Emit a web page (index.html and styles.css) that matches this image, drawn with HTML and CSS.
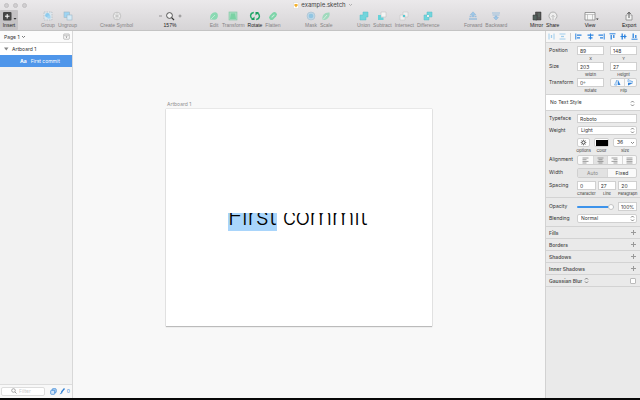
FILE: index.html
```html
<!DOCTYPE html>
<html lang="en">
<head>
<meta charset="utf-8">
<title>example.sketch</title>
<link rel="stylesheet" href="styles.css">
</head>
<body>
<div class="app">
<header class="header">
  <div class="titlebar">
    <div class="lights"><i></i><i></i><i></i></div>
    <h1 class="title"><svg viewBox="0 0 6 7" width="6" height="7"><path d="M.5.5h4l1 1v5h-5z" fill="#fff" stroke="#ccc" stroke-width=".4"/><path d="M1 3l1-1h2l1 1-2 2.5z" fill="#f4b12f"/></svg>example.sketch<svg viewBox="0 0 5 4" width="5" height="4"><path d="M1 1l1.500 1.500L4 1" fill="none" stroke="#999" stroke-width=".7"/></svg></h1>
  </div>
  <nav class="toolbar">
    <div class="group">
      <button class="tool on insert"><svg viewBox="0 0 16 10" width="16" height="10"><rect x="2" y="1" width="8.500" height="8.500" rx="1" fill="#444"/><path d="M6.200 3v4.500M4 5.200h4.500" stroke="#fff"/><path d="M12.500 7h3l-1.500 1.800z" fill="#333"/></svg>Insert</button>
    </div>
    <div class="group">
      <button class="tool"><svg viewBox="0 0 10 10" width="10" height="10"><rect x="1" y="1" width="8" height="8" fill="#dde7ee" stroke="#a8b3bb" stroke-width=".6" stroke-dasharray="1.500 1"/><circle cx="4.500" cy="4.300" r="2.300" fill="#8ccbee"/><rect x="4.500" y="4.500" width="3" height="3" fill="#a2d6f2"/></svg>Group</button>
      <button class="tool"><svg viewBox="0 0 10 10" width="10" height="10"><rect x="1" y="1" width="5.500" height="5.500" fill="#9ed5f3" stroke="#9db6c5" stroke-width=".6"/><rect x="4" y="4" width="5" height="5" fill="#d5ebf7" stroke="#9db6c5" stroke-width=".6"/></svg>Ungroup</button>
    </div>
    <div class="group">
      <button class="tool"><svg viewBox="0 0 10 10" width="10" height="10"><circle cx="5" cy="5" r="3.800" fill="#eee" stroke="#b4b4b4" stroke-width=".7"/><path d="M5 1.500v7M2.500 3.500L5 5l2.500-1.500M2.500 6.500L5 5l2.500 1.500" fill="none" stroke="#bbb" stroke-width=".7"/></svg>Create Symbol</button>
    </div>
    <div class="group">
      <button class="tool on"><svg viewBox="0 0 24 10" width="24" height="10"><path d="M1 5h3M20.500 5h3M22 3.500v3" stroke="#777" stroke-width=".7"/><circle cx="11.500" cy="4.500" r="2.900" fill="#f3f3f3" stroke="#444" stroke-width=".9"/><path d="M13.600 6.600l2.400 2.400" stroke="#333" stroke-width="1.200"/></svg>157%</button>
    </div>
    <div class="group">
      <button class="tool"><svg viewBox="0 0 10 10" width="10" height="10"><path d="M1.300 8.500C.3 4 3.500 1 6.500 1.300 10 2 9.500 8 6 8.800z" fill="#8bd9b3"/><path d="M2 8l4-4" stroke="#d5f2e2" stroke-width=".7"/></svg>Edit</button>
      <button class="tool"><svg viewBox="0 0 10 10" width="10" height="10"><rect x="1" y="1" width="8" height="8" fill="#a6ddc0" stroke="#82c7a3" stroke-width=".6"/><path d="M3 2.500h4l1 5.500H2z" fill="#7bd2a4"/></svg>Transform</button>
      <button class="tool on"><svg viewBox="0 0 12 10" width="12" height="10"><path d="M4.800 1.500C1 2 .5 6.500 3.800 8M7.200 8.500c3.800-.5 4.300-5 1-6.500" fill="none" stroke="#20a968" stroke-width="1.400"/><path d="M2 9h3.500V5.500zM10 1H6.500v3.500z" fill="#179b5c"/></svg>Rotate</button>
      <button class="tool"><svg viewBox="0 0 10 10" width="10" height="10"><g transform="rotate(-45 5 5)"><rect x=".5" y="2.500" width="9" height="5" rx="2.500" fill="#7ed4a9"/><path d="M3 5h4" stroke="#c9eeda"/></g></svg>Flatten</button>
    </div>
    <div class="group">
      <button class="tool"><svg viewBox="0 0 10 10" width="10" height="10"><circle cx="5" cy="5" r="4" fill="#bcd7e7" stroke="#a2b9c8" stroke-width=".5"/><circle cx="5" cy="5" r="2.300" fill="#91c5e2"/></svg>Mask</button>
      <button class="tool"><svg viewBox="0 0 10 10" width="10" height="10"><path d="M1.500 9C.5 4 4 1 8.500 1.500 9.500 6 6 9.500 1.500 9z" fill="#a0d9bd"/><path d="M2 8.500L6 4" stroke="#dff4e9" stroke-width=".8"/></svg>Scale</button>
    </div>
    <div class="group">
      <button class="tool"><svg viewBox="0 0 10 10" width="10" height="10"><path d="M4 1h5v5H7v3H1V4h3z" fill="#72d5dc" stroke="#58bfc8" stroke-width=".5"/></svg>Union</button>
      <button class="tool"><svg viewBox="0 0 10 10" width="10" height="10"><path d="M4 1h5v5H4z" fill="#f4f4f4" stroke="#bbb" stroke-width=".5"/><path d="M1 4h3v2.500h2.500V9H1z" fill="#67d2d9"/></svg>Subtract</button>
      <button class="tool"><svg viewBox="0 0 10 10" width="10" height="10"><path d="M4 1h5v5H4zM1 4h5v5H1z" fill="#f0f0f0" stroke="#c2c2c2" stroke-width=".5"/><path d="M4 4h2v2H4z" fill="#55c9d2"/></svg>Intersect</button>
      <button class="tool"><svg viewBox="0 0 10 10" width="10" height="10"><path d="M4 1h5v5H4zM1 4h5v5H1z" fill="#72d5dc" stroke="#58bfc8" stroke-width=".5"/><path d="M4 4h2v2H4z" fill="#eee"/></svg>Difference</button>
    </div>
    <div class="group">
      <button class="tool"><svg viewBox="0 0 10 10" width="10" height="10"><path d="M5 .8l2.800 3H6v2H4v-2H2.200z" fill="#9ec7e8" stroke="#7fadd5" stroke-width=".4"/><path d="M1.500 5.500h2M6.500 5.500h2M1 8h8" stroke="#9bbfdd" stroke-width="1.300"/></svg>Forward</button>
      <button class="tool"><svg viewBox="0 0 10 10" width="10" height="10"><path d="M1 2h8M1.500 4h7" stroke="#9bbfdd" stroke-width="1.200"/><path d="M5 9L2.500 6.500H4V5h2v1.500h1.500z" fill="#9ec7e8" stroke="#7fadd5" stroke-width=".4"/></svg>Backward</button>
    </div>
    <div class="group">
      <button class="tool on"><svg viewBox="0 0 10 10" width="10" height="10"><path d="M3.500 1H9v8H3.500z" fill="#555" stroke="#333" stroke-width=".5"/><path d="M1 4h4v5H1z" fill="#53625e" stroke="#333" stroke-width=".5"/><path d="M6 3h2M6 5h2" stroke="#6c9181" stroke-width=".6"/></svg>Mirror</button>
      <button class="tool on"><svg viewBox="0 0 10 10" width="10" height="10"><path d="M3 8.500a4 4 0 1 1 4 0" fill="#eee" stroke="#a5a5a5" stroke-width=".8"/><path d="M5 9V4.500M3.500 5.800L5 4.300l1.500 1.500" fill="none" stroke="#aaa" stroke-width=".7"/></svg>Share</button>
    </div>
    <div class="group">
      <button class="tool on"><svg viewBox="0 0 20 10" width="20" height="10"><path d="M5 1.500h10V9H5z" fill="#f7f7f7" stroke="#777" stroke-width=".7"/><path d="M5 3.500h10M7.500 3.500V9M12.500 3.500V9" stroke="#999" stroke-width=".5"/><path d="M16 7.500h2.600L17.300 9z" fill="#333"/></svg>View</button>
    </div>
    <div class="group">
      <button class="tool on"><svg viewBox="0 0 10 10" width="10" height="10"><path d="M3.500 4H2v5h6V4H6.500" fill="#f3f3f3" stroke="#888" stroke-width=".8"/><path d="M5 7V1.500M3.300 3L5 1.200 6.700 3" fill="none" stroke="#333" stroke-width=".8"/></svg>Export</button>
    </div>
  </nav>
</header>
<div class="body">
  <aside class="layers">
    <div class="pages"><button class="page">Page 1 <svg viewBox="0 0 5 4" width="5" height="4"><path d="M1 1l1.500 1.500L4 1" fill="none" stroke="#444" stroke-width=".7"/></svg></button><button class="icon" aria-label="Show pages"><svg viewBox="0 0 7 7" width="7" height="7"><rect x=".7" y="1" width="5.600" height="5.200" rx=".6" fill="none" stroke="#999" stroke-width=".6"/><path d="M1 2.300h5" stroke="#999" stroke-width=".5"/><path d="M2.500 3.500h2L3.500 5z" fill="#777"/></svg></button></div>
    <div class="tree">
      <div class="node"><svg viewBox="0 0 5 4" width="5" height="4"><path d="M0 .5h4.500L2.300 3.500z" fill="#888"/></svg>Artboard 1</div>
      <div class="node child"><b>Aa</b>First commit</div>
    </div>
    <div class="filter">
      <label class="search"><svg viewBox="0 0 6 6" width="6" height="6"><circle cx="2.500" cy="2.500" r="1.800" fill="none" stroke="#888" stroke-width=".7"/><path d="M4 4l1.500 1.500" stroke="#888" stroke-width=".8"/></svg><input placeholder="Filter" aria-label="Filter"></label>
      <svg viewBox="0 0 7 7" width="7" height="7"><rect x="2.200" y=".7" width="4" height="4" rx=".7" fill="#b7d5f4" stroke="#2f7fd4" stroke-width=".7"/><rect x=".7" y="2.300" width="4" height="4" rx=".7" fill="#d5e7fa" stroke="#2f7fd4" stroke-width=".7"/></svg>
      <svg viewBox="0 0 6 7" width="6" height="7"><path d="M5.500.5L2.500 4" stroke="#2f7fd4" stroke-width="1.300"/><path d="M2.800 3.500L.5 6.500 3.500 5z" fill="#2f7fd4"/></svg>
      <span>0</span>
    </div>
  </aside>
  <main class="canvas">
    <section class="artboard">
      <h2>Artboard 1</h2>
      <p class="layer"><span><mark>First</mark> commit</span></p>
    </section>
  </main>
  <aside class="inspector">
    <div class="align">
      <button aria-label="Distribute horizontally"><svg class="dim" viewBox="0 0 7 7" width="7" height="7"><path d="M1 .5v6M6 .5v6"/><path d="M3.500 2v3" stroke-width="1.300"/></svg></button>
      <button aria-label="Distribute vertically"><svg class="dim" viewBox="0 0 7 7" width="7" height="7"><path d="M.5 1h6M.5 6h6"/><path d="M2 3.500h3" stroke-width="1.300"/></svg></button>
      <i></i>
      <button aria-label="Align left"><svg viewBox="0 0 7 7" width="7" height="7"><path d="M.8.500v6"/><path d="M2 2.200h4.500M2 4.800h3" stroke-width="1.300"/></svg></button>
      <button aria-label="Align center"><svg viewBox="0 0 7 7" width="7" height="7"><path d="M3.500.500v6"/><path d="M.5 2.200h6M1.500 4.800h4" stroke-width="1.300"/></svg></button>
      <button aria-label="Align right"><svg viewBox="0 0 7 7" width="7" height="7"><path d="M6.200.500v6"/><path d="M.5 2.200H5M2 4.800h3" stroke-width="1.300"/></svg></button>
      <button aria-label="Align top"><svg viewBox="0 0 7 7" width="7" height="7"><path d="M.5.800h6"/><path d="M2.200 2v4.500M4.800 2v3" stroke-width="1.300"/></svg></button>
      <button aria-label="Align middle"><svg viewBox="0 0 7 7" width="7" height="7"><path d="M.5 3.500h6"/><path d="M2.200.500v6M4.800 1.500v4" stroke-width="1.300"/></svg></button>
      <button aria-label="Align bottom"><svg viewBox="0 0 7 7" width="7" height="7"><path d="M.5 6.200h6"/><path d="M2.200.500V5M4.800 2v3" stroke-width="1.300"/></svg></button>
    </div>
    <section class="geometry">
      <div class="row"><span>Position</span><div class="two"><label><input value="89">X</label><label><input value="148">Y</label></div></div>
      <div class="row"><span>Size</span><div class="two"><label><input value="203">Width</label><label><input value="27">Height</label></div></div>
      <div class="row"><span>Transform</span><div class="two"><label><input value="0º">Rotate</label><div class="cap"><div class="seg"><button aria-label="Flip horizontal"><svg viewBox="0 0 7 7" width="7" height="7"><path d="M3 1v5H.5z" fill="none" stroke="#4695e5" stroke-width=".6"/><path d="M4 1v5h2.500z" fill="#2f80d8"/></svg></button><button aria-label="Flip vertical"><svg viewBox="0 0 7 7" width="7" height="7"><path d="M1 3h5L1 .5z" fill="none" stroke="#4695e5" stroke-width=".6"/><path d="M1 4h5L1 6.500z" fill="#2f80d8"/></svg></button></div>Flip</div></div></div>
    </section>
    <div class="style pick"><select aria-label="Text style"><option>No Text Style</option></select><svg class="ud" viewBox="0 0 5 7" width="5" height="7"><path d="M1 2.500L2.500 1 4 2.500M1 4.500L2.500 6 4 4.500"/></svg></div>
    <section class="text">
      <label class="row"><span>Typeface</span><input value="Roboto"></label>
      <label class="row"><span>Weight</span><div class="pick"><select><option>Light</option></select><svg class="ud" viewBox="0 0 5 7" width="5" height="7"><path d="M1 2.500L2.500 1 4 2.500M1 4.500L2.500 6 4 4.500"/></svg></div></label>
      <div class="row"><span></span><div class="opts"><div class="cap"><button class="box" aria-label="Options"><svg viewBox="0 0 7 7" width="7" height="7"><circle cx="3.500" cy="3.500" r="1.600" fill="none" stroke="#444"/><path d="M3.500.700v1M3.500 5.300v1M.7 3.500h1M5.300 3.500h1M1.500 1.500l.7.700M4.800 4.800l.7.700M5.500 1.500l-.7.700M2.200 4.800l-.7.700" stroke="#444" stroke-width=".7"/></svg></button>Options</div><div class="cap"><button class="box" aria-label="Color"><i class="swatch"></i></button>Color</div><label><div class="pick"><select><option>36</option></select><svg class="ud" viewBox="0 0 5 7" width="5" height="7"><path d="M1 3l1.500 1.500L4 3"/></svg></div>Size</label></div></div>
      <div class="row seg-row"><span>Alignment</span><div class="seg four">
        <button aria-label="Left"><svg viewBox="0 0 7 7" width="7" height="7"><path d="M.5 1h6M.5 2.700h4M.5 4.400h6M.5 6h4"/></svg></button>
        <button class="sel" aria-label="Center"><svg viewBox="0 0 7 7" width="7" height="7"><path d="M.5 1h6M1.500 2.700h4M.5 4.400h6M1.500 6h4"/></svg></button>
        <button aria-label="Right"><svg viewBox="0 0 7 7" width="7" height="7"><path d="M.5 1h6M2.500 2.700h4M.5 4.400h6M2.500 6h4"/></svg></button>
        <button aria-label="Justify"><svg viewBox="0 0 7 7" width="7" height="7"><path d="M.5 1h6M.5 2.700h6M.5 4.400h6M.5 6h6"/></svg></button></div></div>
      <div class="row seg-row"><span>Width</span><div class="seg"><button class="sel">Auto</button><button class="dark">Fixed</button></div></div>
      <div class="row"><span>Spacing</span><div class="three"><label><input value="0">Character</label><label><input value="27">Line</label><label><input value="20">Paragraph</label></div></div>
    </section>
    <section class="blend">
      <label class="row"><span>Opacity</span><div class="opacity"><input type="range" value="100" aria-label="Opacity"><input value="100%" aria-label="Opacity value"></div></label>
      <label class="row"><span>Blending</span><div class="pick"><select><option>Normal</option></select><svg class="ud" viewBox="0 0 5 7" width="5" height="7"><path d="M1 2.500L2.500 1 4 2.500M1 4.500L2.500 6 4 4.500"/></svg></div></label>
    </section>
    <div class="fold">Fills<button aria-label="Add fill"></button></div>
    <div class="fold">Borders<button aria-label="Add border"></button></div>
    <div class="fold">Shadows<button aria-label="Add shadow"></button></div>
    <div class="fold">Inner Shadows<button aria-label="Add inner shadow"></button></div>
    <label class="fold"><span>Gaussian Blur <svg class="ud" viewBox="0 0 5 7" width="5" height="7"><path d="M1 2.500L2.500 1 4 2.500M1 4.500L2.500 6 4 4.500"/></svg></span><input type="checkbox"></label>
  </aside>
</div>
</div>
</body>
</html>
```
FILE: styles.css
```css
* { box-sizing: border-box; }
body { margin: 0; font: 5px/6px Inter, "Liberation Sans", sans-serif; color: #333; background: #f8f8f8; }
svg { display: block; flex: none; }
button, input, select { font: inherit; color: inherit; margin: 0; padding: 0; border: 0; background: none; min-width: 0; outline: 0; }
h1, h2, p { margin: 0; font-weight: 400; }
.app { min-height: 100vh; display: flex; flex-direction: column; border-bottom: 2px solid #080808; }

.header { background: linear-gradient(#ebe9eb, #d6d4d6); border-bottom: 1px solid #c4c4c4; }
.titlebar { height: 10px; display: grid; grid-template-columns: 1fr auto 1fr; align-items: center; }
.lights { display: flex; gap: 4px; padding-left: 4px; }
.lights i { width: 5px; height: 5px; border-radius: 50%; background: #d0ced0; border: 1px solid #c2c0c2; }
.title { display: flex; align-items: center; gap: 2px; padding-left: 6px; font-size: 6px; line-height: 8px; color: #444; }
.toolbar { display: grid; grid-template-columns: 41fr 59fr 58fr 51fr 96fr 52fr 107fr 66fr 50fr 42fr 18fr; font-family: "Liberation Sans", sans-serif; }
.group { display: flex; gap: 3px; min-width: 0; }
.tool { display: flex; flex-direction: column; align-items: center; height: 20px; padding-top: 1px; gap: 1px; line-height: 6px; color: #858385; white-space: nowrap; }
.on { color: #222; }
.insert { width: 18px; background: #c5c3c5; border-radius: 1px; }

.body { flex: 1; display: grid; grid-template-columns: 73px minmax(0, 1fr) 95px; }
.layers { display: flex; flex-direction: column; background: #f2f2f2; border-right: 1px solid #d8d8d8; }
.pages { display: flex; justify-content: space-between; align-items: center; height: 12px; padding: 0 2px 0 4px; background: #fbfbfb; border-bottom: 1px solid #ddd; }
.page { display: flex; align-items: center; gap: 2px; }
.tree { flex: 1; }
.node { display: flex; align-items: center; height: 12px; padding-left: 4px; gap: 3px; background: #fff; }
.child { background: #4f96ea; color: #fff; padding-left: 20px; gap: 4px; }
.filter { display: flex; align-items: center; gap: 2px; height: 14px; padding: 0 2px 1px 1px; background: #f8f8f8; border-top: 1px solid #ddd; color: #2f7fd4; }
.search { display: flex; align-items: center; gap: 2px; flex: 1; min-width: 0; height: 9px; margin-right: 3px; padding-left: 9px; background: #fff; border: 1px solid #ddd; border-radius: 2px; }
.search input { width: 100%; }
.search input::placeholder { color: #ccc; }

.canvas { position: relative; background: #f8f8f8; }
.artboard { position: absolute; left: 93px; top: 78px; width: 266px; height: 217px; background: #fff; box-shadow: 0 1px 1px #bbb, 0 0 1px #999; }
.artboard h2 { position: absolute; left: 1px; top: -8px; font-size: 5px; line-height: 6px; color: #929292; }
.layer { position: absolute; left: 62px; top: 104px; height: 18px; display: flex; align-items: flex-end; overflow: hidden; font: 300 25px/28px Roboto, sans-serif; color: #000; white-space: nowrap; }
.layer mark { background: #a9d5fb; color: inherit; }

.inspector { background: #eaeaea; border-left: 1px solid #d2d2d2; }
.align { display: flex; justify-content: space-between; align-items: center; height: 12px; padding: 0 2px; background: #f7f7f7; border-bottom: 1px solid #d6d6d6; }
.align i { width: 1px; height: 8px; background: #ccc; }
.align svg { fill: none; stroke: #2d84df; stroke-width: 1; }
.align .dim { stroke: #a0cdec; }
.inspector section { padding: 3px 3px 0; border-bottom: 1px solid #d3d3d3; }
.row { display: grid; grid-template-columns: 27px minmax(0, 1fr); gap: 0 1px; }
.row > span { line-height: 9px; white-space: nowrap; }
.two { display: grid; grid-template-columns: 1fr 1fr; gap: 6px; }
.three { display: grid; grid-template-columns: 1fr 1fr 1fr; gap: 2px; }
.two label, .three label, .opts label, .cap { display: flex; flex-direction: column; align-items: center; height: 16px; min-width: 0; font-size: 4px; line-height: 7px; white-space: nowrap; }
.row input:not([type=range]), .pick, .box { width: 100%; height: 9px; flex: none; background: #fff; border: 1px solid #d0d0d0; font-size: 5px; line-height: 7px; }
.row input:not([type=range]) { padding-left: 2px; }
.pick { position: relative; border-radius: 2px; }
.pick select { appearance: none; display: block; width: 100%; height: 100%; padding-left: 3px; }
.pick .ud { position: absolute; right: 1px; top: 0; pointer-events: none; }
.ud { fill: none; stroke: #555; stroke-width: .7; }
.seg { display: grid; grid-template-columns: 1fr 1fr; width: 100%; height: 9px; flex: none; background: #fafafa; border: 1px solid #d0d0d0; border-radius: 2px; }
.seg button { display: flex; align-items: center; justify-content: center; line-height: 7px; color: #888; }
.seg button + button { border-left: 1px solid #d8d8d8; }
.seg .sel { background: #e2e2e2; }
.seg .dark { color: #333; }
.four { grid-template-columns: repeat(4, 1fr); }
.four svg { stroke: #777; stroke-width: .7; }
.seg-row { margin: 1px 0 3px; }
.seg-row .seg { height: 10px; }
.style.pick { height: 16px; border-width: 0 0 1px; border-radius: 0; border-style: solid; border-color: #d3d3d3; }
.style select { padding-left: 4px; }
.style .ud { top: 5px; right: 5px; }
.text > label { margin-bottom: 3px; }
.opts { display: grid; grid-template-columns: 13fr 15fr 24fr; gap: 4px; }
.box { display: flex; align-items: center; justify-content: center; border-radius: 2px; }
.swatch { width: 12px; height: 6px; background: #000; }
.inspector .blend { padding-top: 4px; }
.blend .row { height: 12px; }
.opacity { display: grid; grid-template-columns: 37px minmax(0, 1fr); gap: 4px; align-items: center; height: 9px; }
.opacity input[type=range] { appearance: none; width: 100%; height: 7px; }
.opacity input::-webkit-slider-runnable-track { height: 2px; background: #3d93eb; border-radius: 1px; }
.opacity input::-webkit-slider-thumb { appearance: none; width: 6px; height: 6px; margin-top: -2px; border-radius: 50%; background: #fff; border: 1px solid #c4c4c4; }
.fold { display: flex; justify-content: space-between; align-items: center; height: 12px; padding: 0 4px 0 3px; border-bottom: 1px solid #d3d3d3; font-weight: 600; color: #555; }
.fold span { display: flex; align-items: center; gap: 2px; }
.fold button { width: 5px; height: 5px; background: linear-gradient(#999, #999) center / 5px 1px no-repeat, linear-gradient(#999, #999) center / 1px 5px no-repeat; }
.fold input { appearance: none; width: 6px; height: 6px; background: #fff; border: 1px solid #bbb; border-radius: 1px; }
```
